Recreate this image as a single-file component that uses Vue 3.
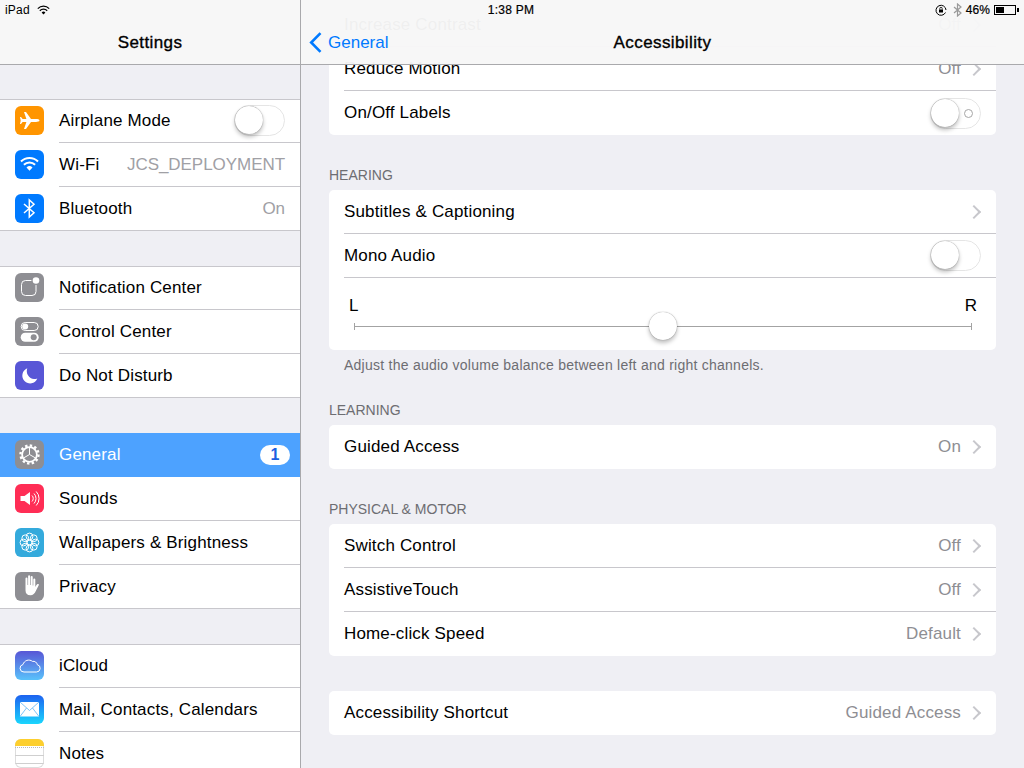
<script setup>
const flower = Array.from({ length: 8 }, (_, i) => {
  const a = (i * Math.PI) / 4
  const x = (14.5 + Math.cos(a) * 6).toFixed(2)
  const y = (14.5 + Math.sin(a) * 6).toFixed(2)
  return `<circle cx="${x}" cy="${y}" r="3.4" fill="none" stroke="#fff" stroke-width="1"/>`
}).join('') + '<circle cx="14.5" cy="14.5" r="2.4" fill="none" stroke="#fff" stroke-width="1"/>'

const icons = {
  plane: '<path fill="#fff" d="M24.5 14.5c0-1-2-1.4-3.5-1.4h-5L11 6H9l2.4 7.1H7.600L6 11H5l.7 3.5L5 18h1l1.600-2.100h3.800L9 23h2l5-7.100h5c1.500 0 3.500-.4 3.500-1.400z"/>',
  wifi: '<g fill="none" stroke="#fff" stroke-width="2"><path d="M6 11.500a12 12 0 0 1 17 0"/><path d="M8.900 14.700a8 8 0 0 1 11.200 0"/></g><path fill="#fff" d="M11.500 17.500a4.300 4.300 0 0 1 6 0l-3 3.200z"/>',
  bluetooth: '<path fill="none" stroke="#fff" stroke-width="1.500" d="M9 10l10 8.800-4.700 4.200V6l4.700 4.200L9 19"/>',
  notif: '<rect x="6.500" y="7.500" width="14.500" height="15" rx="4" fill="none" stroke="#fff" stroke-width="1"/><circle cx="21" cy="7.500" r="4.600" fill="#8e8e93"/><circle cx="21" cy="7.500" r="3.300" fill="#fff"/>',
  control: '<rect x="6.200" y="5.500" width="17" height="8" rx="4" fill="none" stroke="#fff" stroke-width="1"/><circle cx="10.200" cy="9.500" r="3" fill="#fff"/><rect x="5.700" y="15.700" width="18" height="9" rx="4.500" fill="#fff"/><circle cx="18.700" cy="20.200" r="3" fill="#8e8e93"/>',
  moon: '<path fill="#fff" d="M12.300 7.300a7.800 7.800 0 1 0 10 10.300 9 9 0 0 1-3.300.5 8 8 0 0 1-6.700-10.800z"/>',
  gear: '<circle cx="14.500" cy="14.500" r="9" fill="none" stroke="#fff" stroke-width="2.400" stroke-dasharray="2.400 2.310"/><circle cx="14.500" cy="14.500" r="7.400" fill="none" stroke="#fff" stroke-width="1.800"/><path fill="none" stroke="#fff" stroke-width="1" d="M14.500 14.500V7.500M14.500 14.500l6 3.500M14.500 14.500l-6 3.500"/>',
  sound: '<path fill="#fff" d="M5.500 12h4l5.500-4v13l-5.500-4h-4z"/><g fill="none" stroke="#fff" stroke-width="1"><path d="M17 11.500a4.200 4.200 0 0 1 0 6"/><path d="M19 9.500a7.200 7.200 0 0 1 0 10"/><path d="M21.200 7.500a10 10 0 0 1 0 14"/></g>',
  flower,
  hand: '<path fill="#fff" d="M10.500 6.500a1 1 0 0 1 2 0V13h.6V4.300a1 1 0 0 1 2 0V13h.6V5a1 1 0 0 1 2 0v8.500h.6V7.500a1 1 0 0 1 2 0V15l1-1.800c.6-1 1.500-1.500 2.200-1.100.5.300.4.900.1 1.500L20.800 19c-1 2.700-2.800 4.200-5.300 4.200-3.300 0-5-1.800-5-5z"/>',
  cloud: '<path fill="none" stroke="#fff" stroke-width="1" d="M9 21h12.500a3.700 3.700 0 0 0 .8-7.300 4 4 0 0 0-4.800-3.300A6 6 0 0 0 8 13.500 3.800 3.800 0 0 0 9 21z"/>',
  mail: '<rect x="5" y="7" width="19" height="14.500" fill="#fff"/><path fill="none" stroke="#5cb4f5" stroke-width=".8" d="M5 7l9.500 8.500L24 7M5 21.500l6.500-8.500M24 21.500L17.500 13"/>',
  notes: '<rect width="29" height="7" fill="#fdcf2e"/><path stroke="#b9b9b9" stroke-width="1" stroke-dasharray="1 1" d="M0 8.500h29"/><path stroke="#cfcfcf" stroke-width="1" d="M0 16.500h29M0 24.500h29"/>',
}

const groups = [
  [
    { label: 'Airplane Mode', icon: 'plane', color: 'orange', toggle: true },
    { label: 'Wi-Fi', icon: 'wifi', color: 'blue', value: 'JCS_DEPLOYMENT' },
    { label: 'Bluetooth', icon: 'bluetooth', color: 'blue', value: 'On' },
  ],
  [
    { label: 'Notification Center', icon: 'notif', color: 'gray' },
    { label: 'Control Center', icon: 'control', color: 'gray' },
    { label: 'Do Not Disturb', icon: 'moon', color: 'indigo' },
  ],
  [
    { label: 'General', icon: 'gear', color: 'gray', badge: 1, selected: true },
    { label: 'Sounds', icon: 'sound', color: 'pink' },
    { label: 'Wallpapers & Brightness', icon: 'flower', color: 'sky' },
    { label: 'Privacy', icon: 'hand', color: 'gray' },
  ],
  [
    { label: 'iCloud', icon: 'cloud', color: 'icloud' },
    { label: 'Mail, Contacts, Calendars', icon: 'mail', color: 'mail' },
    { label: 'Notes', icon: 'notes', color: 'paper' },
  ],
]

const hearing = [
  { label: 'Subtitles & Captioning', chevron: true },
  { label: 'Mono Audio', toggle: true },
]
const motor = [
  { label: 'Switch Control', value: 'Off', chevron: true },
  { label: 'AssistiveTouch', value: 'Off', chevron: true },
  { label: 'Home-click Speed', value: 'Default', chevron: true },
]
</script>

<template>
  <div class="ipad">
    <div class="status">
      <div class="status-left">
        <span class="status-carrier">iPad</span>
        <svg width="13" height="10" viewBox="0 0 13 10"><path fill="none" stroke="#000" stroke-width="1.300" d="M.8 3.600a8 8 0 0 1 11.400 0M2.800 5.700a5.200 5.200 0 0 1 7.400 0"/><path d="M4.600 7.400a2.700 2.700 0 0 1 3.800 0L6.500 9.400z"/></svg>
      </div>
      <div class="status-time">1:38 PM</div>
      <div class="status-right">
        <svg width="12" height="12" viewBox="0 0 12 12"><path fill="none" stroke="#000" stroke-width="1" d="M10.500 8.500A5 5 0 1 1 11 6"/><rect x="4" y="5.500" width="4" height="3" /><path fill="none" stroke="#000" stroke-width=".8" d="M4.800 5.500V4.500a1.200 1.200 0 0 1 2.400 0v1"/></svg>
        <svg class="status-bt" width="9" height="14" viewBox="0 0 9 14"><path fill="none" stroke="#999" stroke-width="1.200" d="M1 4l7 6-3.500 3V1L8 4l-7 6"/></svg>
        <span class="status-pct">46%</span>
        <div class="battery"><div class="battery-fill" :style="{ width: '46%' }"></div></div>
        <div class="battery-nub"></div>
      </div>
    </div>

    <aside class="side">
      <header class="nav side-nav"><span class="nav-title">Settings</span></header>
      <div class="side-list">
        <section v-for="(group, i) in groups" :key="i" class="side-group">
          <div v-for="item in group" :key="item.label" class="side-row" :class="{ selected: item.selected }">
            <span class="icon" :class="item.color">
              <svg width="29" height="29" viewBox="0 0 29 29" v-html="icons[item.icon]"></svg>
            </span>
            <div class="side-body">
              <span class="label">{{ item.label }}</span>
              <span v-if="item.value" class="value">{{ item.value }}</span>
              <span v-if="item.toggle" class="toggle"><span class="knob"></span></span>
              <span v-if="item.badge" class="badge">{{ item.badge }}</span>
            </div>
          </div>
        </section>
      </div>
    </aside>

    <main class="detail">
      <header class="nav detail-nav">
        <span class="back">
          <svg width="13" height="21" viewBox="0 0 13 21"><path fill="none" stroke="#007aff" stroke-width="2.600" d="M11.500 1.200L2.200 10.500l9.300 9.300"/></svg>
          General
        </span>
        <span class="nav-title">Accessibility</span>
      </header>

      <div class="detail-scroll">
        <section class="card card-top">
          <div class="row row-first">
            <div class="row-body"><span class="label">Increase Contrast</span><span class="value">Off</span><i class="chevron"></i></div>
          </div>
          <div class="row">
            <div class="row-body"><span class="label">Reduce Motion</span><span class="value">Off</span><i class="chevron"></i></div>
          </div>
          <div class="row">
            <div class="row-body">
              <span class="label">On/Off Labels</span>
              <span class="toggle"><span class="knob"></span><span class="off-mark"></span></span>
            </div>
          </div>
        </section>

        <h3 class="section-title">HEARING</h3>
        <section class="card">
          <div v-for="item in hearing" :key="item.label" class="row">
            <div class="row-body">
              <span class="label">{{ item.label }}</span>
              <i v-if="item.chevron" class="chevron"></i>
              <span v-if="item.toggle" class="toggle"><span class="knob"></span></span>
            </div>
          </div>
          <div class="balance">
            <div class="balance-labels"><span>L</span><span>R</span></div>
            <div class="track"><span class="track-knob"></span></div>
          </div>
        </section>
        <p class="footnote">Adjust the audio volume balance between left and right channels.</p>

        <h3 class="section-title learning">LEARNING</h3>
        <section class="card">
          <div class="row">
            <div class="row-body"><span class="label">Guided Access</span><span class="value">On</span><i class="chevron"></i></div>
          </div>
        </section>

        <h3 class="section-title">PHYSICAL &amp; MOTOR</h3>
        <section class="card">
          <div v-for="item in motor" :key="item.label" class="row">
            <div class="row-body"><span class="label">{{ item.label }}</span><span class="value">{{ item.value }}</span><i class="chevron"></i></div>
          </div>
        </section>

        <section class="card shortcut">
          <div class="row">
            <div class="row-body"><span class="label">Accessibility Shortcut</span><span class="value">Guided Access</span><i class="chevron"></i></div>
          </div>
        </section>
      </div>
    </main>
  </div>
</template>

<style scoped>
.ipad {
  position: relative;
  display: flex;
  width: 1024px;
  height: 768px;
  overflow: hidden;
  background: #efeff4;
  color: #000;
  font-family: "Liberation Sans", Arial, sans-serif;
  font-size: 17px;
}

.status {
  position: absolute;
  top: 0;
  left: 0;
  right: 0;
  z-index: 5;
  display: grid;
  grid-template-columns: 1fr auto 1fr;
  align-items: center;
  height: 20px;
  padding: 0 5px;
  font-size: 12px;
}
.status-left {
  display: flex;
  align-items: center;
  gap: 7px;
}
.status-carrier {
  letter-spacing: .2px;
}
.status-time {
  font-weight: 500;
  letter-spacing: .25px;
  -webkit-text-stroke: .2px #000;
  transform: translateX(-1px);
}
.status-right {
  display: flex;
  align-items: center;
  justify-content: flex-end;
}
.status-bt {
  margin-left: 6px;
}
.status-pct {
  margin-left: 4px;
  letter-spacing: .1px;
  -webkit-text-stroke: .2px #000;
}
.battery {
  width: 22px;
  height: 10px;
  margin-left: 4px;
  padding: 1px;
  border: 1px solid #000;
  box-sizing: border-box;
}
.battery-fill {
  height: 100%;
  background: #000;
}
.battery-nub {
  width: 2px;
  height: 4px;
  margin-left: 1px;
  background: #000;
}

.nav {
  box-sizing: border-box;
  display: flex;
  align-items: center;
  justify-content: center;
  height: 65px;
  padding-top: 21px;
  border-bottom: 1px solid #a9a9ac;
  background: #f7f7f7;
}
.nav-title {
  font-weight: 500;
  letter-spacing: .4px;
  -webkit-text-stroke: .35px #000;
}

.side {
  flex: none;
  width: 300px;
  border-right: 1px solid #a9a9ac;
}
.side-list {
  padding-top: 34px;
}
.side-group {
  margin-bottom: 35px;
  background: #fff;
}
.side-row {
  display: flex;
  height: 44px;
  padding-left: 15px;
}
.side-row:first-child {
  box-shadow: inset 0 1px 0 #c8c7cc;
}
.side-row:last-child {
  box-shadow: inset 0 -1px 0 #c8c7cc;
}
.side-row.selected {
  background: #4da2ff;
  box-shadow: none;
  color: #fff;
}
.icon {
  flex: none;
  width: 29px;
  height: 29px;
  margin-top: 7px;
  overflow: hidden;
  border-radius: 6px;
}
.icon svg {
  display: block;
}
.orange { background: #ff9500; }
.blue { background: #007aff; }
.gray { background: #8e8e93; }
.indigo { background: #5856d6; }
.pink { background: #ff2d55; }
.sky { background: #34aadc; }
.icloud { background: linear-gradient(#5856d6, #5ac2fb); }
.mail { background: linear-gradient(#1d62f0, #1ad6fd); }
.paper {
  box-sizing: border-box;
  background: #fff;
  box-shadow: inset 0 0 0 1px #ddd;
}
.side-body {
  box-sizing: border-box;
  flex: 1;
  display: flex;
  align-items: center;
  justify-content: space-between;
  height: 44px;
  margin-left: 15px;
  padding-right: 15px;
  border-bottom: 1px solid #c8c7cc;
}
.side-row:last-child .side-body,
.side-row.selected .side-body {
  border-bottom-color: transparent;
}
.side-row.selected .side-body {
  padding-right: 10px;
}
.label {
  letter-spacing: .16px;
  white-space: nowrap;
}
.value {
  color: #8e8e93;
  letter-spacing: .16px;
  white-space: nowrap;
}
.side-body .value {
  letter-spacing: -.05px;
  color: #a0a0a5;
}
.badge {
  width: 30px;
  height: 20px;
  border-radius: 10px;
  background: #fff;
  color: #1c5fe0;
  font-size: 16px;
  font-weight: 700;
  line-height: 20px;
  text-align: center;
}

.toggle {
  position: relative;
  box-sizing: border-box;
  flex: none;
  width: 51px;
  height: 31px;
  border: 1.5px solid #e5e5e5;
  border-radius: 16px;
  background: #fff;
}
.knob {
  position: absolute;
  top: 0;
  left: 0;
  width: 28px;
  height: 28px;
  border-radius: 50%;
  background: #fff;
  box-shadow: 0 0 1px rgba(0, 0, 0, .5), 0 3px 4px rgba(0, 0, 0, .25);
}
.off-mark {
  position: absolute;
  top: 10px;
  right: 7px;
  box-sizing: border-box;
  width: 9px;
  height: 9px;
  border: 1px solid #a6a6a6;
  border-radius: 50%;
}

.detail {
  position: relative;
  flex: 1;
  min-width: 0;
}
.detail-nav {
  position: absolute;
  top: 0;
  left: 0;
  right: 0;
  z-index: 3;
  background: rgba(247, 247, 247, .97);
}
.back {
  position: absolute;
  top: 32px;
  left: 8px;
  display: flex;
  align-items: center;
  gap: 6px;
  height: 21px;
  color: #007aff;
}
.detail-scroll {
  padding: 0 28px;
}
.card {
  overflow: hidden;
  border-radius: 5px;
  background: #fff;
}
.card-top {
  border-radius: 0 0 5px 5px;
}
.row {
  height: 44px;
  padding-left: 15px;
}
.row-first {
  height: 47px;
  display: flex;
  align-items: flex-end;
}
.row-first .row-body {
  flex: 1;
}
.row-body {
  box-sizing: border-box;
  display: flex;
  align-items: center;
  height: 44px;
  padding-right: 15px;
  border-bottom: 1px solid #c8c7cc;
}
.card > .row:last-child .row-body {
  border-bottom: 0;
}
.row-body .label {
  flex: 1;
}
.chevron {
  flex: none;
  box-sizing: border-box;
  width: 10px;
  height: 10px;
  margin: 0 2px 0 8px;
  border-top: 2px solid #c7c7cc;
  border-right: 2px solid #c7c7cc;
  transform: rotate(45deg);
}

.section-title {
  margin: 0;
  padding: 32px 0 7px;
  color: #6d6d72;
  font-size: 14px;
  font-weight: 400;
  line-height: 16px;
}
.balance {
  box-sizing: border-box;
  height: 72px;
  padding: 19px 19px 0 20px;
}
.balance-labels {
  display: flex;
  justify-content: space-between;
  font-size: 17px;
  line-height: 18px;
}
.track {
  position: relative;
  height: 1px;
  margin: 11px 5px 0;
  background: #a3a3a3;
}
.track::before,
.track::after {
  content: "";
  position: absolute;
  top: -3px;
  width: 1px;
  height: 7px;
  background: #a3a3a3;
}
.track::before { left: 0; }
.track::after { right: 0; }
.track-knob {
  position: absolute;
  top: -14px;
  left: calc(50% - 14.5px);
  width: 28px;
  height: 28px;
  border-radius: 50%;
  background: #fff;
  box-shadow: 0 0 1px rgba(0, 0, 0, .5), 0 3px 4px rgba(0, 0, 0, .25);
}
.footnote {
  margin: 0;
  padding: 7px 15px 0;
  color: #6d6d72;
  font-size: 14px;
  letter-spacing: .25px;
  line-height: 16px;
}
.learning {
  padding-top: 29px;
}
.shortcut {
  margin-top: 35px;
}
</style>
